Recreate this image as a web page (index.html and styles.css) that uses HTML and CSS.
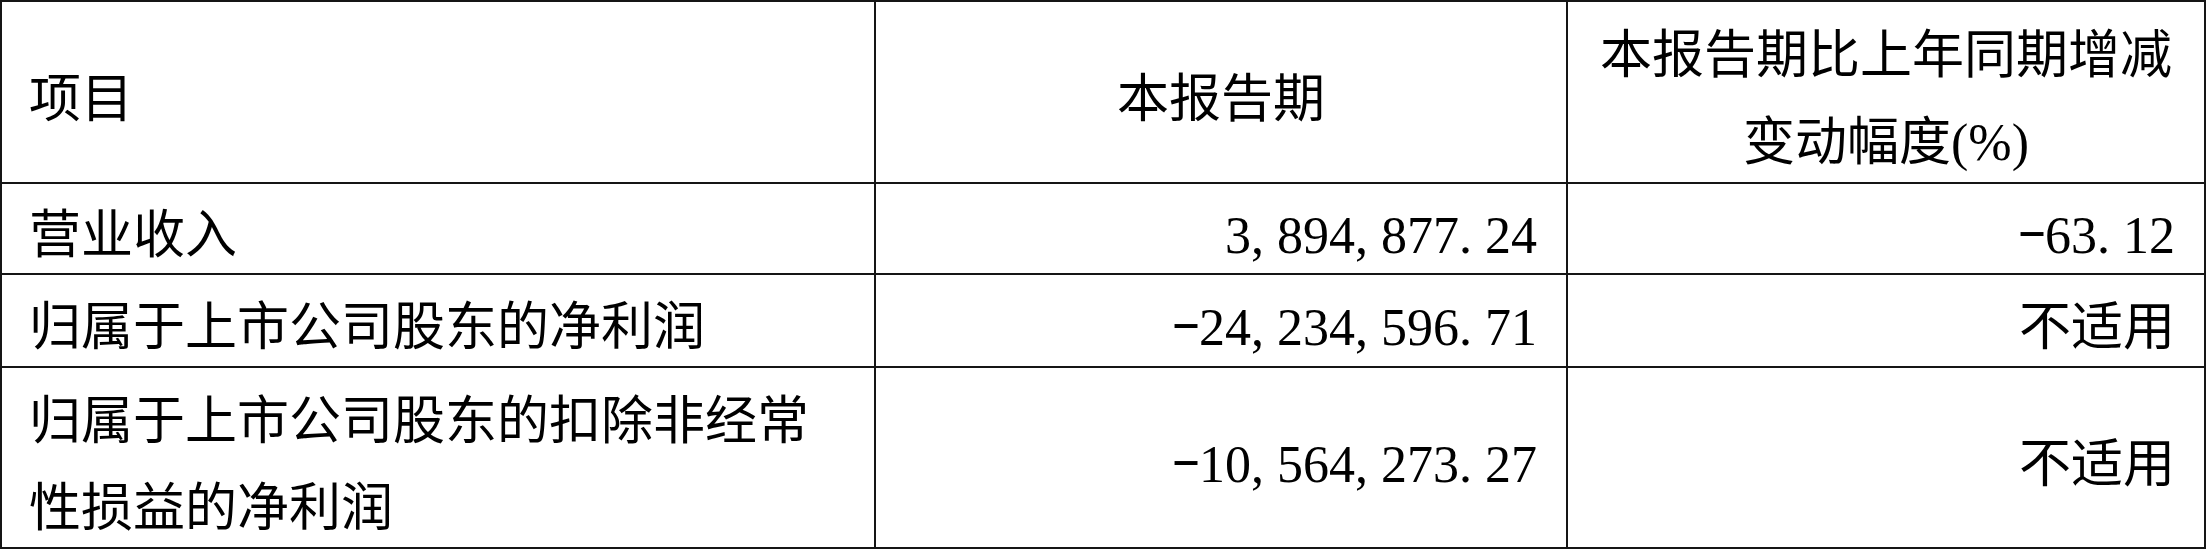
FILE: index.html
```html
<!DOCTYPE html>
<html lang="zh-CN">
<head>
<meta charset="utf-8">
<title>主要会计数据</title>
<link rel="stylesheet" href="styles.css">
</head>
<body>
<div class="table">
  <div class="cell left head">项目</div>
  <div class="cell center head">本报告期</div>
  <div class="cell center head">本报告期比上年同期增减变动幅度(%)</div>

  <div class="cell left">营业收入</div>
  <div class="cell right num">3<span class="p">,</span>894<span class="p">,</span>877<span class="p">.</span>24</div>
  <div class="cell right num"><span class="neg">-</span>63<span class="p">.</span>12</div>

  <div class="cell left">归属于上市公司股东的净利润</div>
  <div class="cell right num"><span class="neg">-</span>24<span class="p">,</span>234<span class="p">,</span>596<span class="p">.</span>71</div>
  <div class="cell right">不适用</div>

  <div class="cell left">归属于上市公司股东的扣除非经常性损益的净利润</div>
  <div class="cell right num"><span class="neg">-</span>10<span class="p">,</span>564<span class="p">,</span>273<span class="p">.</span>27</div>
  <div class="cell right">不适用</div>
</div>
</body>
</html>
```

FILE: styles.css
```css
html, body {
  margin: 0;
  padding: 0;
  background: #ffffff;
}

.table {
  width: 2206px;
  display: grid;
  grid-template-columns: 872px 690px 636px;
  grid-template-rows: 180px 89px 91px 179px;
  gap: 2px;
  padding: 2px;
  box-sizing: border-box;
  background: #151515;
  font-family: "Liberation Serif", "Noto Sans CJK SC", serif;
  font-size: 52px;
  color: #000;
}

.cell {
  background: #ffffff;
  display: flex;
  align-items: center;
  padding: 14px 27px 0 27px;
  line-height: 87px;
  box-sizing: border-box;
}

.left {
  justify-content: flex-start;
  text-align: left;
}

.center {
  justify-content: center;
  text-align: center;
}

.right {
  justify-content: flex-end;
  text-align: right;
  padding-right: 29px;
}

.head.center:last-child,
.cell:nth-child(3) {
  padding-left: 20px;
  padding-right: 20px;
}

.p {
  letter-spacing: 0.25em;
}

.neg {
  display: inline-block;
  width: 0.5em;
  text-align: center;
  transform: translateY(-6px) scaleX(1.7);
}
```
